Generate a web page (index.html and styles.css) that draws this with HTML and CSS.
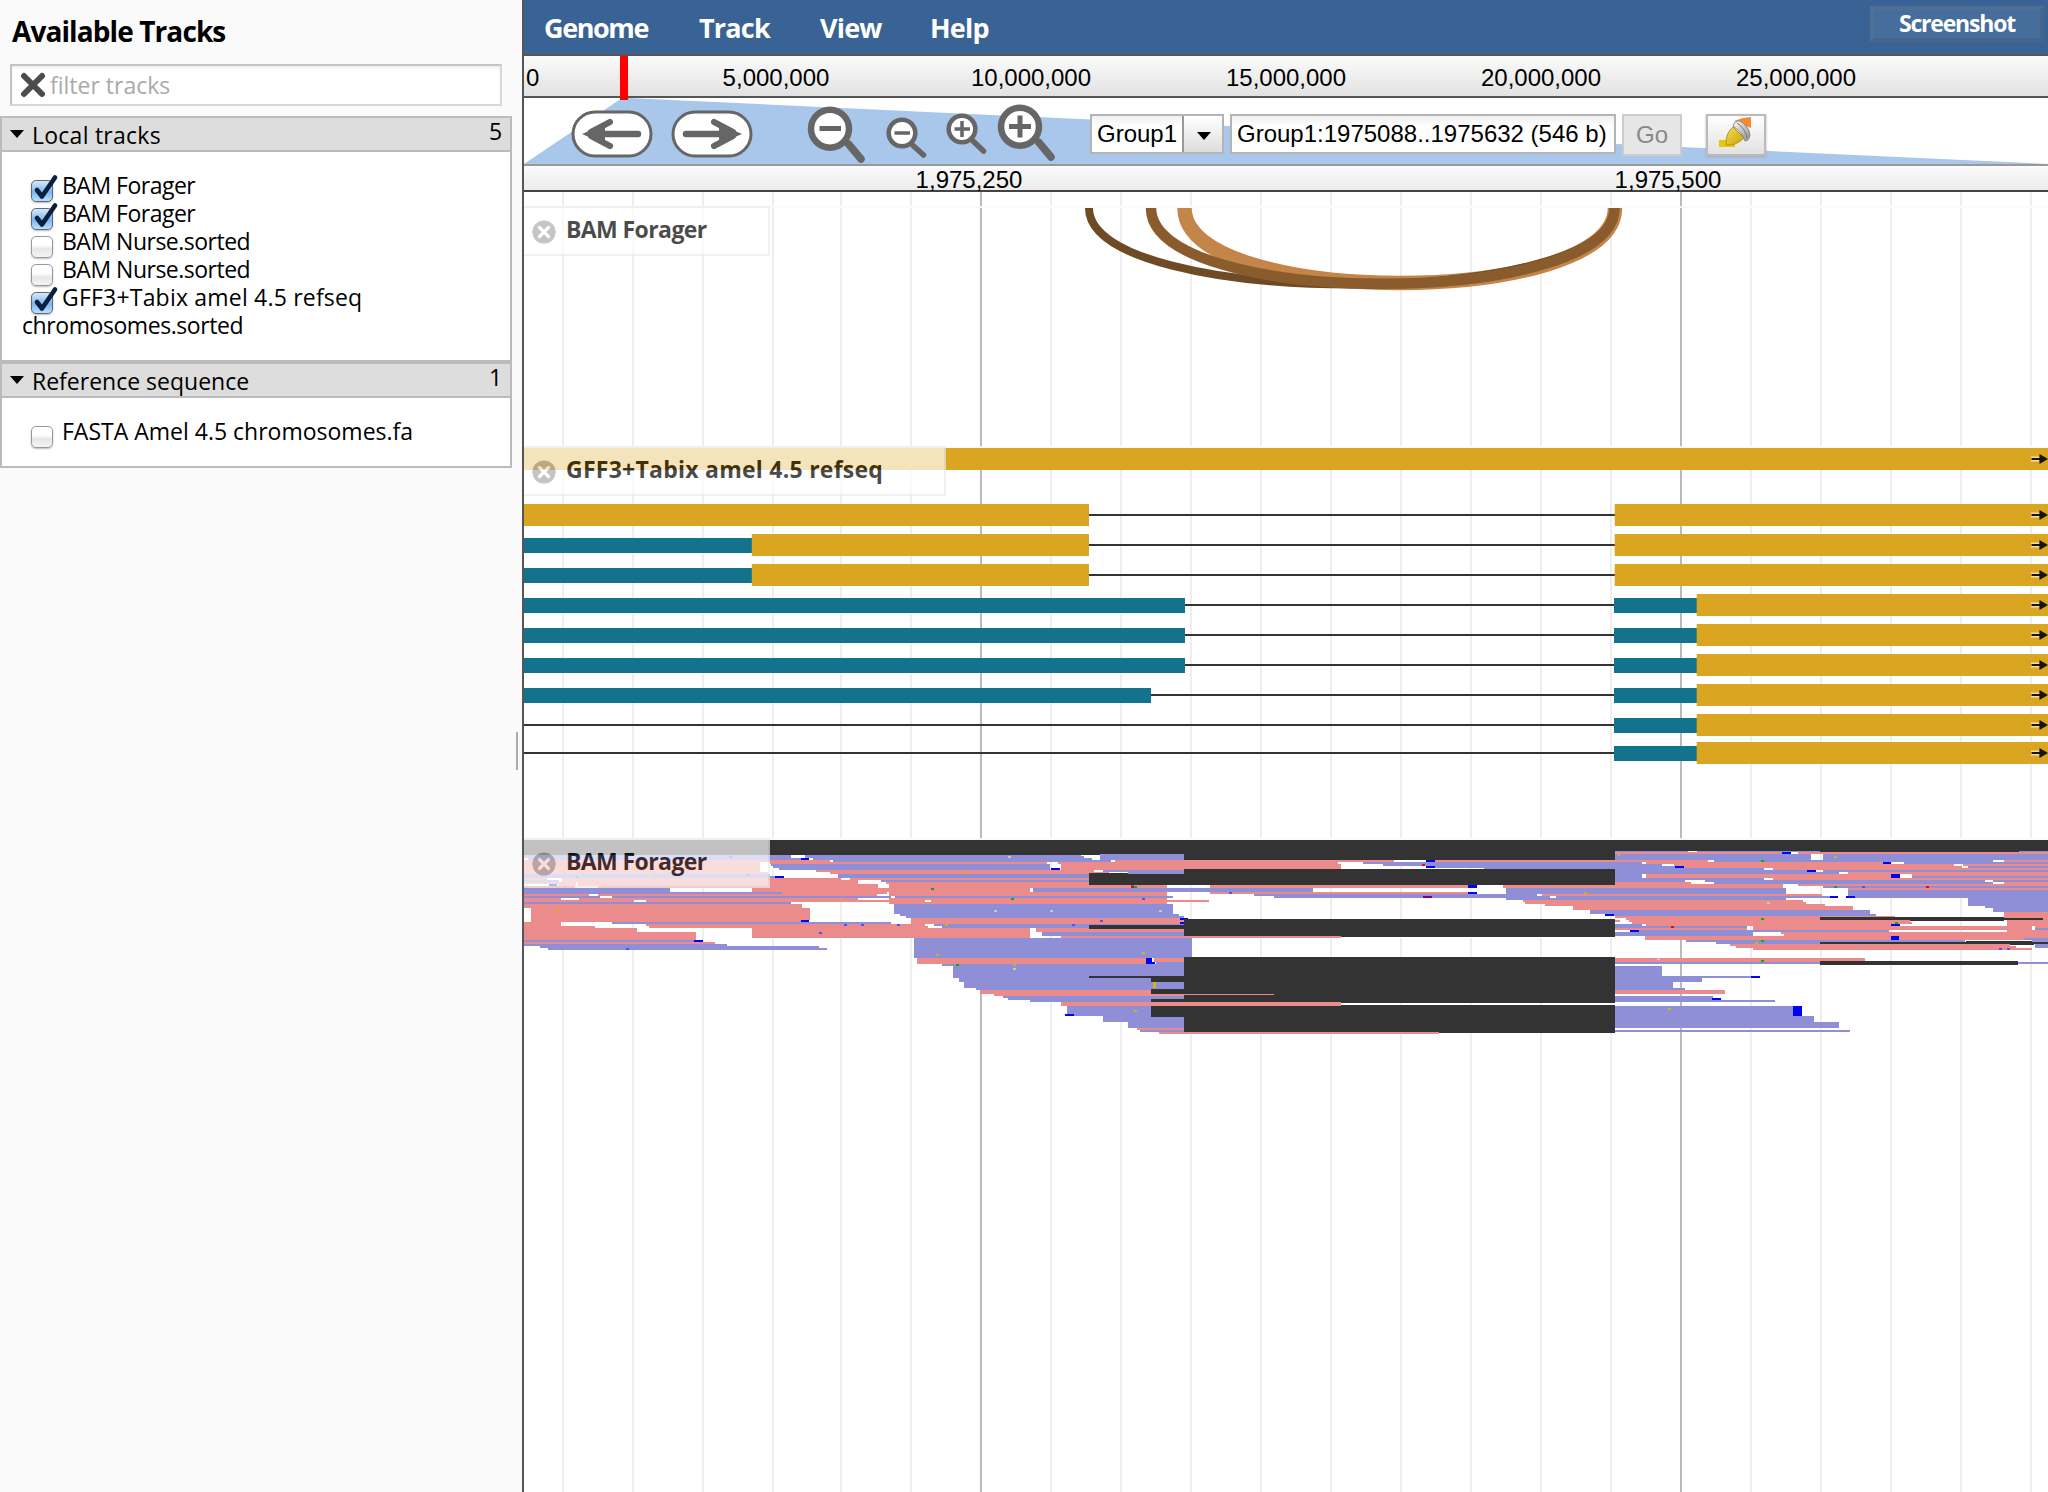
FILE: index.html
```html
<!DOCTYPE html>
<html lang="en">
<head>
<meta charset="utf-8">
<title>Genome browser</title>
<link rel="stylesheet" href="styles.css">
</head>
<body>
<svg class="defs" width="0" height="0">
  <defs>
    <linearGradient id="metal" x1="0" y1="0" x2="1" y2="1"><stop offset="0" stop-color="#fff"/><stop offset="1" stop-color="#8c8c8c"/></linearGradient>
    <linearGradient id="tip" x1="0" y1="0" x2="1" y2="1"><stop offset="0" stop-color="#f5e04a"/><stop offset="1" stop-color="#c9a00c"/></linearGradient>
    <symbol id="close" viewBox="0 0 24 24"><circle cx="12" cy="12" r="11.6" fill="#adadad"/><path d="M7.5 7.5l9 9m0-9l-9 9" stroke="#fff" stroke-width="3.2" stroke-linecap="round"/></symbol>
    <symbol id="check" viewBox="0 0 28 28"><path d="M6 16l5 6.500L24 3.500" fill="none" stroke="#06203f" stroke-width="4.600" stroke-linecap="round" stroke-linejoin="round"/></symbol>
  </defs>
</svg>
<div class="app">
  <aside class="sidebar">
    <h2>Available Tracks</h2>
    <div class="filter">
      <svg width="26" height="26" viewBox="0 0 26 26"><path d="M4 4l18 18M22 4L4 22" stroke="#4c4c4c" stroke-width="6" stroke-linecap="round"/></svg>
      <span>filter tracks</span>
    </div>
    <section class="category">
      <header><i class="tri"></i><span class="name local">Local tracks</span><span class="count">5</span></header>
      <div class="items first">
        <label><b class="box on"><svg><use href="#check"/></svg></b><span class="t1">BAM Forager</span></label>
        <label><b class="box on"><svg><use href="#check"/></svg></b><span class="t1">BAM Forager</span></label>
        <label><b class="box"></b><span class="t2">BAM Nurse.sorted</span></label>
        <label><b class="box"></b><span class="t2">BAM Nurse.sorted</span></label>
        <label><b class="box on"><svg><use href="#check"/></svg></b><span class="t3">GFF3+Tabix amel 4.5 refseq</span></label>
        <label><span class="t4">chromosomes.sorted</span></label>
      </div>
    </section>
    <section class="category">
      <header><i class="tri"></i><span class="name refseq">Reference sequence</span><span class="count">1</span></header>
      <div class="items second">
        <label><b class="box"></b><span class="t5">FASTA Amel 4.5 chromosomes.fa</span></label>
      </div>
    </section>
    <i class="grip"></i>
  </aside>

  <main>
    <nav class="menu">
      <span class="m1">Genome</span><span class="m2">Track</span><span class="m3">View</span><span class="m4">Help</span>
      <button class="shot"><span>Screenshot</span></button>
    </nav>
    <div class="overview">
      <span class="zero">0</span><span>5,000,000</span><span>10,000,000</span><span>15,000,000</span><span>20,000,000</span><span>25,000,000</span>
      <i class="here"></i>
    </div>
    <div class="controls">
      <svg class="trapezoid" width="1524" height="66"><path d="M98 0H104L1524 66H0z" fill="#a9c6eb"/></svg>
      <svg class="pill left" width="82" height="48" viewBox="0 0 82 48"><rect x="2" y="2" width="78" height="44" rx="22" fill="#fff" stroke="#666" stroke-width="3"/><path d="M67 24H26" stroke="#666" stroke-width="6.500" stroke-linecap="round"/><path d="M39 12L20 22M39 36L20 26" stroke="#666" stroke-width="6" stroke-linecap="round"/><path d="M11 24L34 14V34z" fill="#666"/></svg>
      <svg class="pill right" width="82" height="48" viewBox="0 0 82 48"><rect x="2" y="2" width="78" height="44" rx="22" fill="#fff" stroke="#666" stroke-width="3"/><path d="M15 24H56" stroke="#666" stroke-width="6.500" stroke-linecap="round"/><path d="M43 12L62 22M43 36L62 26" stroke="#666" stroke-width="6" stroke-linecap="round"/><path d="M71 24L48 14V34z" fill="#666"/></svg>
      <svg class="lenses" width="256" height="66" fill="#fff" stroke="#666">
        <path d="M44.500 46L57 61" stroke-width="7.500" stroke-linecap="round"/><circle cx="26" cy="30.700" r="19" stroke-width="6.500"/><path d="M15.500 30.500H37" stroke-width="5"/>
        <path d="M109 47.500L119.500 57" stroke-width="5.500" stroke-linecap="round"/><circle cx="98" cy="35" r="13.300" stroke-width="4.600"/><path d="M90.500 35H106" stroke-width="3.500"/>
        <path d="M169 43L179.500 53" stroke-width="5.500" stroke-linecap="round"/><circle cx="158" cy="31" r="13.300" stroke-width="4.600"/><path d="M150.500 31H166M158 23V39" stroke-width="3.500"/>
        <path d="M234.500 44L247 59" stroke-width="7.500" stroke-linecap="round"/><circle cx="216" cy="28.700" r="19" stroke-width="6.500"/><path d="M205 28.500H227M216 17.500V39.500" stroke-width="5"/>
      </svg>
      <div class="combo"><span>Group1</span><b><i class="tri"></i></b></div>
      <div class="location">Group1:1975088..1975632 (546 b)</div>
      <button class="go">Go</button>
      <button class="mark"><svg width="34" height="32" viewBox="0 0 34 32"><path d="M1 23h16v7H1z" fill="#e6c713"/><path d="M16 4l9-3 8-1v11z" fill="#f58a34"/><path d="M8 26Q8 16 15 10L26 21Q18 29 8 28z" fill="url(#tip)" stroke="#b8940f"/><path d="M15 9Q17 3 22 4Q31 9 32 18Q31 24 27 24Q24 15 15 9z" fill="url(#metal)" stroke="#888"/><path d="M19 6Q27 11 29 21" fill="none" stroke="#777"/></svg></button>
    </div>
    <div class="ruler"><span>1,975,250</span><span>1,975,500</span></div>

    <div class="tracks">
      <svg class="grid" width="1524" height="1300">
        <path stroke="#eee" stroke-width="2" d="M39 0V1300M109 0V1300M179 0V1300M249 0V1300M317 0V1300M387 0V1300M527 0V1300M597 0V1300M667 0V1300M737 0V1300M807 0V1300M877 0V1300M947 0V1300M1017 0V1300M1087 0V1300M1227 0V1300M1297 0V1300M1367 0V1300M1437 0V1300M1507 0V1300"/>
        <path stroke="#bbb" stroke-width="2" d="M457 0V1300M1157 0V1300"/>
      </svg>
      <section class="track arcs">
        <svg width="1524" height="238" fill="none">
          <path d="M660.500 0C660.500 100 1091 100 1091 0" stroke="#c38648" stroke-width="14.500"/>
          <path d="M565 0C565 102 1090.500 102 1090.500 0" stroke="#6e4a25" stroke-width="8"/>
          <path d="M627 0C627 101 1090.500 101 1090.500 0" stroke="#8a5c2d" stroke-width="10.500"/>
        </svg>
        <div class="tag"><svg><use href="#close"/></svg><span class="g1">BAM Forager</span></div>
      </section>
      <section class="track genes">
        <svg id="genes" width="1524" height="390"></svg>
        <div class="tag wide"><svg><use href="#close"/></svg><span class="g2">GFF3+Tabix amel 4.5 refseq</span></div>
      </section>
      <section class="track reads">
        <svg id="reads" width="1524" height="652"></svg>
        <div class="tag"><svg><use href="#close"/></svg><span class="g1">BAM Forager</span></div>
      </section>
    </div>
  </main>
</div>
<script src="tracks.js"></script>
</body>
</html>
```
FILE: styles.css
```css
* { box-sizing: border-box; }
body { margin: 0; background: #fff; color: #000; font-family: "Open Sans", "Noto Sans", sans-serif; }
.defs { position: absolute; }
.app { display: flex; width: 2048px; height: 1492px; overflow: hidden; }
svg { display: block; flex: none; }

.sidebar { position: relative; width: 524px; flex: none; background: #fafafa; border-right: 2px solid #555; font-size: 23px; }
h2 { margin: 0; padding: 11px 0 0 12px; height: 64px; font-size: 28px; line-height: 40px; font-weight: 700; letter-spacing: -0.9px; white-space: nowrap; }
.filter { display: flex; align-items: center; width: 492px; height: 42px; margin-left: 10px; padding: 0 8px; border: 2px solid #c4c4c4; border-bottom-color: #d8d8d8; border-right-color: #d8d8d8; background: #fff; box-shadow: inset 0 2px 3px #eee; color: #aaa; }
.filter svg { margin-right: 4px; }
.category { width: 512px; border: 2px solid #bbb; background: #fff; }
.filter + .category { margin-top: 10px; }
.category header { display: flex; height: 34px; line-height: 32px; background: #ddd; border-bottom: 2px solid #bbb; white-space: nowrap; }
.tri { display: block; width: 14px; height: 8px; background: #000; clip-path: polygon(0 0, 100% 0, 50% 100%); }
header .tri { margin: 12px 8px 0; }
.name { flex: 1; padding-top: 1px; }
.local { letter-spacing: 0.25px; }
.count { width: 21px; margin-top: -3px; }
.items { padding: 19px 20px 0; line-height: 28px; white-space: nowrap; }
.first { height: 208px; }
.second { height: 68px; }
.items label { display: flex; height: 28px; }
.box { flex: none; width: 22px; height: 22px; margin: 9px 9px 0 9px; border: 1.5px solid #999; border-radius: 5px; background: linear-gradient(#fff 40%, #e6e6e6 60%, #f5f5f5); box-shadow: 0 1px 2px #bbb; }
.box.on { border-color: #667; background: linear-gradient(#d8e9fa, #7fb5ee 55%, #b5e0ff); }
.box svg { width: 28px; height: 28px; margin: -7px 0 0 -1px; }
.t1, .t2 { letter-spacing: -0.5px; }
.t3 { letter-spacing: 0.2px; }
.t4 { letter-spacing: -0.43px; }
.grip { position: absolute; left: 516px; top: 732px; width: 2px; height: 38px; background: #aaa; }

main { width: 1524px; flex: none; display: flex; flex-direction: column; }
.menu { display: flex; height: 56px; background: #396395; border-bottom: 2px solid #555; padding-left: 20px; color: #fff; font-size: 27px; font-weight: 700; letter-spacing: -0.8px; line-height: 56px; white-space: nowrap; }
.m1 { width: 155px; letter-spacing: -1.4px; }
.m2 { width: 121px; }
.m3 { width: 110px; }
.shot { width: 174px; height: 36px; margin: 6px 4px 0 auto; padding: 0; border: 4px solid; border-color: #4f7095 #43658e #43658e #4f7095; background: #456e9c; color: #fff; font: 700 23px/26px "Open Sans", sans-serif; }
.shot span { position: relative; top: -1px; letter-spacing: -1.2px; }
.overview, .ruler { display: flex; position: relative; font: 24px/44px "Liberation Sans", Arial, sans-serif; text-align: center; }
.overview { height: 42px; background: linear-gradient(#fbfbfb, #e2e2e2); border-bottom: 2px solid #555; }
.overview span { width: 255px; flex: none; }
.overview .zero { width: 124.5px; padding-left: 2px; text-align: left; }
.here { position: absolute; z-index: 2; left: 96px; top: 0; width: 8px; height: 44px; background: #f00; }
.controls { position: relative; display: flex; height: 68px; border-bottom: 2px solid #999; background: #fff; font: 24px/36px "Liberation Sans", Arial, sans-serif; }
.controls > * { position: relative; }
.controls .trapezoid { position: absolute; left: 0; top: 0; }
.pill { margin-top: 12px; }
.pill.left { margin-left: 47px; }
.pill.right { margin-left: 18px; }
.lenses { margin-left: 51px; margin-right: 30px; }
.combo { display: flex; width: 134px; height: 40px; margin-top: 16px; border: 2px solid #b4b4b4; background: linear-gradient(#f0f0f0, #fff 30%); }
.combo span { width: 90px; padding-left: 5px; }
.combo b { flex: 1; padding: 16px 0 0 13px; border-left: 2px solid #999; background: linear-gradient(#fff, #ddd); }
.location { width: 386px; height: 40px; margin: 16px 0 0 6px; padding-left: 5px; border: 2px solid #b4b4b4; background: linear-gradient(#f0f0f0, #fff 30%); white-space: nowrap; }
.go, .mark { width: 60px; height: 42px; padding: 0; margin: 16px 0 0 6px; border: 2px solid #ccc; background: #e6e6e6; color: #888; font: inherit; }
.mark { margin-left: 24px; border-color: #bbb; background: linear-gradient(#fff, #e2e2e2); box-shadow: 0 1px 2px #aaa; padding-left: 10px; }
.mark svg { margin-top: -4px; }
.ruler { height: 26px; line-height: 27px; background: linear-gradient(#fbfbfb, #ececec); border-bottom: 2px solid #444; padding-left: 95.5px; }
.ruler span { width: 699px; flex: none; }

.tracks { position: relative; height: 1300px; padding-top: 14px; }
.grid { position: absolute; left: 0; top: 0; }
.track { position: relative; border-top: 2px solid #fafafa; }
.arcs { height: 240px; }
.genes { height: 392px; }
.reads { height: 654px; }
.tag { position: absolute; left: 0; top: -2px; display: flex; width: 246px; height: 50px; padding: 12px 0 0 8px; background: #fff; border: 2px solid #ececec; border-left: 0; opacity: .7; font-size: 23px; line-height: 24px; font-weight: 700; white-space: nowrap; }
.tag.wide { width: 422px; }
.tag svg { width: 24px; height: 24px; margin-right: 10px; }
.tag span { position: relative; top: -3px; }
.g1 { letter-spacing: -0.6px; }
.g2 { letter-spacing: 0.25px; }
```
FILE: tracks.js
```js
const NS = 'http://www.w3.org/2000/svg';
const COLORS = {
  k: '#333', p: '#8f8fd8', r: '#ec8b8b', b: '#0000ff', w: '#fff',
  y: '#d4b40a', g: '#0cae0c', d: '#5050ff', e: '#c8c8c8', m: '#800080', x: '#f00'
};

function rect(parent, x, y, w, h, fill) {
  const r = document.createElementNS(NS, 'rect');
  r.setAttribute('x', x); r.setAttribute('y', y);
  r.setAttribute('width', w); r.setAttribute('height', h);
  r.setAttribute('fill', fill);
  parent.appendChild(r);
}

// Gene models: top, then UTR / CDS blocks as [start, end]
const GOLD = '#daa520', TEAL = '#14738c';
const genes = document.getElementById('genes');
const models = [
  [0, [], [[0, 1524]]],
  [56, [], [[0, 565], [1090.700, 1524]]],
  [86, [[0, 228]], [[227.800, 565], [1090.700, 1524]]],
  [116, [[0, 228]], [[227.800, 565], [1090.700, 1524]]],
  [146, [[0, 661], [1090, 1173]], [[1172.700, 1524]]],
  [176, [[0, 661], [1090, 1173]], [[1172.700, 1524]]],
  [206, [[0, 661], [1090, 1173]], [[1172.700, 1524]]],
  [236, [[0, 627], [1090, 1173]], [[1172.700, 1524]]],
  [266, [[1090, 1173]], [[1172.700, 1524]]],
  [294, [[1090, 1173]], [[1172.700, 1524]]]
];
for (const [top, utr, cds] of models) {
  if (top) rect(genes, 0, top + 10, 1524, 2, '#333');
  for (const [a, b] of utr) rect(genes, a, top + 4, b - a, 15, TEAL);
  for (const [a, b] of cds) rect(genes, a, top, b - a, 22, GOLD);
  const halo = document.createElementNS(NS, 'path');
  halo.setAttribute('d', `M1507 ${top + 8.5}h8v5h-8z`);
  halo.setAttribute('fill', '#f2dca0');
  genes.appendChild(halo);
  const arrow = document.createElementNS(NS, 'path');
  arrow.setAttribute('d', `M1507.500 ${top + 10}h8v-4l8.500 5l-8.500 5v-4h-8z`);
  arrow.setAttribute('fill', '#181408');
  genes.appendChild(arrow);
}

// Read pileup, in thirds of a pixel: "top bottom" then colour + start-end spans
const tiles = [
[-4, `30 75 k12-1100
75 84 p12-813 p854-1100
84 90 p24-843 b843-867 p879-1100
90 96 r12-930 p939-1100
96 102 r12-720 r750-1100
102 120 r12-720 p753-1100
108 120 w750-759
114 120 w750-777
120 126 r12-720 r888-1100
126 132 r12-744 r930-1100
132 138 p12-750 p955-1100
138 144 p12-765 b765-792 p955-1100
144 150 r12-82 r125-963 r990-1100
150 156 p12-117 r125-1014 p1083-1100
156 162 r12-168 r175-1014
162 168 b87-111 r114-168 r175-1073
168 174 r12-165 r234-1073
156 174 r1107-1110
174 186 p12-450 r696-1100
186 192 p12-786 r786-1100
192 198 r12-207 r234-1071
198 204 p12-240 p276-1100
204 210 r12-123 r177-1014
210 216 r12-342 r378-1100
216 222 p12-813
222 234 r12-846
234 264 r33-870
264 270 r33-870
270 276 r33-843 b843-867
276 282 r12-123 p276-1100
282 288 r12-123 r378-1100
288 294 r12-225 r387-1100
294 306 r12-350 r696-1100
306 324 r12-528 r696-1100
324 330 r12-528
330 336 p12-522 b522-549
336 342 r12-585
342 348 p12-620
348 354 p60-897
354 360 p84-921 d318-327
282 288 d973-981 d1023-1031
306 312 d897-906
240 246 y108-117
132 138 y385-393 g679-687
138 144 g167-175
78 84 d628-636`],
[356, `30 72 k0-1100
72 75 k0-660 p660-912 k912-1100
75 78 p0-603 p660-912 k912-1100
78 84 p0-612 p660-912 k912-1100
84 90 p0-636 p660-912 k912-1100
90 96 p0-693 r705-1100
96 102 r0-501 r534-1100
102 117 p0-510 r543-1100
117 120 p0-510 r543-912 k912-1100
114 120 b513-540
120 126 r0-642 p669-912 k912-1100
126 132 r0-687 p744-912 k912-1100
129 132 k627-744
132 165 k627-1100
132 144 p0-627
144 150 r0-627
150 156 p3-627
156 162 r18-627
162 165 r27-627
165 174 r27-861 r990-1100
174 186 r0-450 p459-1100
186 192 r27-861 r990-1100
192 198 r27-861
198 204 p0-33 p45-879
204 210 r27-861
210 216 r0-987 w135-153
216 222 r27-861
222 252 p42-879
252 258 p60-897
258 264 p78-912
264 282 r93-912
264 270 b900-924
267 318 k912-1100
276 282 p0-33 b900-912
282 288 r0-135 p162-912
288 294 r0-144 p186-627
285 297 k627-912
294 324 r0-450
294 297 r468-627
297 306 r468-912
306 318 p486-912
318 324 r543-1100
324 381 p102-936
381 384 p102-912
384 402 r111-798 b798-816
384 396 r822-912
396 402 b816-825 p828-912
381 609 k912-1100
402 408 p186-912
408 444 p219-912
438 444 k627-912
444 456 p237-812 k812-912
456 474 p252-912 y819-828
474 480 p288-812
474 477 p812-912
477 516 k812-912
480 492 r300-812
492 498 r342-912
492 495 r912-1182
498 504 p369-912
504 507 p384-912
507 510 p384-812
510 516 p450-812
516 528 r543-1100
528 558 p561-812
528 561 k812-912
552 558 b555-582
558 561 p669-812
561 576 p669-912
576 594 p744-912
594 600 r771-912
600 606 p780-912
606 612 r837-1100
78 84 e384-393
126 132 y252-261
174 180 g152-161
165 168 d753-762
168 174 x753-762 g762-771
204 210 g392-401 d786-795
186 192 d1047-1056
240 246 e342-351 e510-519 e837-846
270 276 d660-669
282 288 d51-60 y194-203 d576-585
366 372 y786-795
372 378 y168-178
402 408 g228-237 y400-409
414 420 e400-409
540 546 y761-771`],
[716, `30 90 k0-1125
90 96 r0-462 b558-585 r585-1125
93 96 w462-558
96 102 r0-294 p369-1125
102 108 r0-303 p429-1125 x546-555
108 114 r0-303 b558-585 p585-1125
114 117 r0-303 p732-1125
117 165 k0-1125
165 174 r0-684 b684-711 r789-1125
174 186 p0-219 p798-1125
186 192 r0-684 b684-711 p798-1125
192 198 p42-890 r906-1125
198 204 p102-930 p948-1125 m549-576
204 210 p798-1125
210 216 r849-1125
216 222 r855-1125
222 228 r915-1125
228 240 r999-1125
240 252 p1050-1125
252 258 b1095-1122
267 321 k0-1125
318 324 r0-303
321 324 w303-1125
381 519 k0-1125
492 495 r0-102
525 609 k0-1125
516 528 r0-303
606 612 r0-597
186 192 y1032-1041`],
[1076, `30 63 k40-1344
63 66 p45-264 p291-660 k660-1257 p1257-1344
66 72 r45-546 b546-573 r594-1344
72 90 p45-633 p669-1344
90 96 r0-324 p342-1179 r1212-1344
96 102 p0-126 r138-849 b849-873 p912-1344
102 108 p0-186 r222-1062 r1089-1344
108 114 p0-225 b225-252 r252-1087 p1104-1344
114 120 p45-492 r519-1344
120 126 p45-621 b621-648 p669-1344
126 132 p45-717 r744-1344
132 138 p45-126 r138-873 b873-900 r936-1344
138 144 p45-126 r138-873 b873-900 p936-1344
144 150 p45-492 r519-1344
150 156 p45-255 p316-1155 p1179-1344
156 162 r45-273 p342-1179 r1212-1344
162 168 r45-549 r594-1344
168 174 r0-549 p669-1344
174 180 p0-558 r744-1344
180 192 p0-558 p744-1344
192 198 r0-666 p744-1344
198 204 p0-690 b690-714 b738-765 p765-1344
204 210 p0-558 p1104-1344
210 216 r0-609 p1104-1344
216 222 r0-618 p1104-1344
222 228 r0-675 p1104-1344
228 234 r0-759 p1155-1344
234 240 r0-759 p1179-1344
240 246 p0-810 p1179-1344
246 252 p0-810 r1212-1344
252 258 b15-39 p42-828 r1212-1344
258 264 r45-885 r1212-1344
264 270 r78-930 r1212-1344
261 270 k660-1212
264 270 k1212-1329
270 273 k930-1212
270 276 r45-60 r87-930 r1221-1344
276 282 r96-936 r1221-1344
282 288 p45-126 r138-873 b873-900 r1221-1344
288 294 p45-441 r459-1296 r1305-1344
294 300 r45-441 r459-1296 p1305-1344
300 306 b90-117 p117-867 r1221-1344
306 312 p45-459 r543-1344
312 318 p45-459 r552-1344
318 324 r135-873 b873-897 r897-1344
324 330 r135-873 b873-897 r897-1272 p1272-1344
330 336 p258-1095 p1296-1344
333 336 k1098-1296
336 342 p348-660 k660-1344
342 348 r390-1230 p1305-1344
342 345 k1230-1302
348 354 r408-1248 p1305-1344
354 360 r459-1296 d1197-1206 d1221-1230
384 396 r45-795
396 402 p45-660 p1254-1344
393 405 k660-1254
408 438 p45-186
438 444 p45-453 b453-480
444 456 p45-306
456 474 p45-219
474 480 p45-255
480 492 r45-375
498 504 p45-339
504 510 p45-336 b336-363
510 516 p45-525
528 558 p45-579 b579-606
558 576 p45-642
576 594 p45-717
600 606 p45-750
72 78 y53-61
78 84 y701-710
90 96 g483-492
168 174 g701-710 d785-794 x978-987
216 222 e500-509
264 270 g483-492
276 282 g885-894
288 294 x212-221
330 336 g483-492
336 342 y466-475
384 390 e170-179
390 396 g483-492
534 540 y204-213`]
];
const reads = document.getElementById('reads');
for (const [left, rows] of tiles) {
  for (const line of rows.split('\n')) {
    const [top, bottom, ...spans] = line.split(' ');
    for (const s of spans) {
      const [a, b] = s.slice(1).split('-').map(Number);
      // whole-pixel columns keep neighbouring reads free of seams
      const x0 = Math.round(a / 3) + left, x1 = Math.round(b / 3) + left;
      rect(reads, x0, (top - 30) / 3, x1 - x0, (bottom - top) / 3, COLORS[s[0]]);
    }
  }
}
```
